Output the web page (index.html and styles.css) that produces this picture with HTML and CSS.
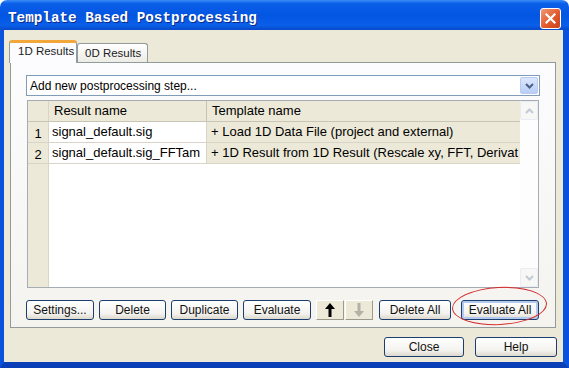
FILE: index.html
```html
<!DOCTYPE html>
<html lang="en">
  <head>
    <meta charset="UTF-8" />
    <title>Template Based Postprocessing</title>
    <link rel="stylesheet" href="styles.css">
  </head>
  <body>
    <div class="window">
      <!-- Title bar -->
      <div class="titlebar">
        <span class="title">Template Based Postprocessing</span>
        <span class="close-x">
          <svg width="11" height="11" viewBox="0 0 11 11">
            <path d="M1.5 1.5 L9.5 9.5 M9.5 1.5 L1.5 9.5" stroke="#fff" stroke-width="2.2" stroke-linecap="square" />
          </svg>
        </span>
      </div>

      <div class="body">
        <!-- Tabs -->
        <div class="tabs">
          <div class="tab active">1D Results</div>
          <div class="tab">0D Results</div>
        </div>

        <div class="panel">
          <div class="combo">
            <span class="combo-text">Add new postprocessing step...</span>
            <span class="combo-btn">
              <svg width="9" height="6" viewBox="0 0 9 6">
                <path d="M1 1 L4.5 4.5 L8 1" fill="none" stroke="#4d6185" stroke-width="2" />
              </svg>
            </span>
          </div>

          <!-- Grid -->
          <div class="grid">
            <div class="cells">
              <div class="row head">
                <div class="rh"></div>
                <div class="c1">Result name</div>
                <div class="c2">Template name</div>
              </div>
              <div class="row">
                <div class="rh">1</div>
                <div class="c1">signal_default.sig</div>
                <div class="c2">+ Load 1D Data File (project and external)</div>
              </div>
              <div class="row">
                <div class="rh">2</div>
                <div class="c1">signal_default.sig_FFTam</div>
                <div class="c2">+ 1D Result from 1D Result (Rescale xy, FFT, Derivat</div>
              </div>
              <div class="filler"><div class="rh"></div></div>
            </div>
            <div class="vscroll">
              <span class="sbtn">
                <svg width="9" height="6" viewBox="0 0 9 6">
                  <path d="M1 5 L4.5 1.5 L8 5" fill="none" stroke="#c3cad6" stroke-width="2" />
                </svg>
              </span>
              <span class="track"></span>
              <span class="sbtn">
                <svg width="9" height="6" viewBox="0 0 9 6">
                  <path d="M1 1 L4.5 4.5 L8 1" fill="none" stroke="#c3cad6" stroke-width="2" />
                </svg>
              </span>
            </div>
          </div>

          <!-- Buttons -->
          <div class="actions">
            <button class="btn w-settings">Settings...</button>
            <button class="btn w-delete">Delete</button>
            <button class="btn w-dup">Duplicate</button>
            <button class="btn w-eval">Evaluate</button>
            <button class="arrow-btn">
              <svg width="12" height="16" viewBox="0 0 12 16">
                <path d="M6 1 L11 7 L7.5 7 L7.5 15 L4.5 15 L4.5 7 L1 7 Z" fill="#000" />
              </svg>
            </button>
            <button class="arrow-btn down">
              <svg width="12" height="16" viewBox="0 0 12 16">
                <path d="M6 15 L11 9 L7.5 9 L7.5 1 L4.5 1 L4.5 9 L1 9 Z" fill="#b4b2a6" />
              </svg>
            </button>
            <button class="btn w-delall">Delete All</button>
            <div class="marked">
              <button class="btn w-evalall focus">Evaluate All</button>
              <span class="ring"></span>
            </div>
          </div>
        </div>

        <div class="footer">
          <button class="btn w-close">Close</button>
          <button class="btn w-help">Help</button>
        </div>
      </div>
    </div>
  </body>
</html>
```

FILE: styles.css
```css
* {
  margin: 0;
  padding: 0;
  box-sizing: border-box;
}

body {
  font-family: "Liberation Sans", Arial, sans-serif;
  font-size: 12px;
  color: #000;
  background: #fff;
}

.window {
  width: 569px;
  height: 368px;
  display: flex;
  flex-direction: column;
}

/* Title bar */
.titlebar {
  height: 30px;
  display: flex;
  justify-content: space-between;
  align-items: flex-start;
  padding: 0 8px 0 8px;
  border-radius: 7px 7px 0 0;
  background: linear-gradient(#3c8df8 0%, #0a5ee8 12%, #0256e2 50%, #0a5fe9 85%, #0848c8 100%);
}

.title {
  font-family: "Liberation Mono", monospace;
  font-weight: bold;
  font-size: 14.3px;
  color: #fff;
  margin-top: 10px;
  text-shadow: 1px 1px 0 #0b2a8a;
}

.close-x {
  margin-top: 8px;
  width: 21px;
  height: 21px;
  border: 1px solid #fff;
  border-radius: 3px;
  background: linear-gradient(135deg, #f09a7a, #e25a2c 55%, #c8421c);
  display: flex;
  align-items: center;
  justify-content: center;
}

/* Window body */
.body {
  flex: 1;
  background: #ece9d8;
  border-left: 4px solid #0a52db;
  border-right: 6px solid #0a52db;
  border-bottom: 6px solid #0a3fb8;
  padding: 10px 6px 0 5px;
  display: flex;
  flex-direction: column;
}

.tabs {
  display: flex;
  align-items: flex-end;
  height: 22px;
  position: relative;
  z-index: 1;
}

.tab {
  height: 19px;
  width: 71px;
  border: 1px solid #919b9c;
  border-bottom: none;
  border-radius: 3px 3px 0 0;
  background: linear-gradient(#fff, #ecebe5);
  font-size: 11.5px;
  color: #222;
  padding: 3px 0 0 7px;
}

.tab.active {
  height: 23px;
  width: 68px;
  margin-bottom: -1px;
  border-top: 3px solid #f3a73a;
  background: #fcfcfe;
  padding: 2px 0 0 8px;
}

.panel {
  margin-left: 1px;
  width: 546px;
  border: 1px solid #919b9c;
  background: linear-gradient(#fcfcfe, #f4f3ee);
  padding: 12px 15px 7px 15px;
  display: flex;
  flex-direction: column;
}

/* Combo */
.combo {
  height: 21px;
  border: 1px solid #7f9db9;
  background: #fff;
  display: flex;
  align-items: center;
  justify-content: space-between;
  padding: 0 1px 0 3px;
}

.combo-btn {
  width: 18px;
  height: 17px;
  border: 1px solid #b9cbf3;
  border-radius: 2px;
  background: linear-gradient(#dce7fd, #b9cdf8);
  display: flex;
  align-items: center;
  justify-content: center;
}

/* Grid */
.grid {
  margin: 4px 1px 0 1px;
  height: 188px;
  border: 1px solid #a5acb5;
  display: flex;
  background: #fff;
  font-size: 13px;
}

.cells {
  flex: 1;
  display: flex;
  flex-direction: column;
  overflow: hidden;
}

.row {
  display: flex;
  height: 21px;
  border-bottom: 1px solid #d8d5c8;
}

.row .rh,
.filler .rh {
  width: 21px;
  flex: none;
  background: #ece9d8;
  border-right: 1px solid #d8d5c8;
  text-align: center;
  padding-top: 4px;
}

.c1 {
  width: 158px;
  flex: none;
  padding: 2px 0 0 3px;
  border-right: 1px solid #d8d5c8;
  white-space: nowrap;
  overflow: hidden;
}

.c2 {
  flex: 1;
  padding: 2px 0 0 4px;
  background: #ece9d8;
  white-space: nowrap;
  overflow: hidden;
}

.row.head {
  background: #ece9d8;
  border-bottom: 1px solid #c9c5b5;
}

.row.head .c1 {
  background: #ece9d8;
  padding-left: 5px;
  border-right: 1px solid #c9c5b5;
}

.row.head .c2 {
  padding-left: 5px;
}

.filler {
  flex: 1;
  display: flex;
}

.vscroll {
  width: 18px;
  display: flex;
  flex-direction: column;
  background: #fdfdfd;
}

.sbtn {
  height: 19px;
  border: 1px solid #e9ecf3;
  border-radius: 2px;
  background: #f7f7f5;
  display: flex;
  align-items: center;
  justify-content: center;
}

.track {
  flex: 1;
}

/* Buttons */
.actions {
  margin-top: 12px;
  display: flex;
  gap: 5px;
}

.btn {
  height: 20px;
  border: 1px solid #1c3d70;
  border-radius: 3px;
  background: linear-gradient(#ffffff, #f3f2ee 70%, #dcd8cc);
  font-family: "Liberation Sans", Arial, sans-serif;
  font-size: 12px;
  color: #111;
}

.btn.focus {
  box-shadow: inset 0 0 0 2px #b3c9ee;
}

.w-settings { width: 68px; }
.w-delete { width: 67px; }
.w-dup { width: 67px; }
.w-eval { width: 68px; }
.w-delall { width: 72px; margin-left: 1px; }
.w-evalall { width: 78px; }
.w-close { width: 80px; }
.w-help { width: 82px; }

.arrow-btn {
  width: 28px;
  height: 20px;
  border: 1px solid;
  border-color: #fff #9d9a8c #9d9a8c #fff;
  background: #ece9d8;
  display: flex;
  align-items: center;
  justify-content: center;
}

.arrow-btn.down {
  margin-left: -4px;
}

.marked {
  position: relative;
  margin-left: 5px;
}

.ring {
  position: absolute;
  left: -9px;
  right: -8px;
  top: -13px;
  bottom: -5px;
  border: 1.5px solid #d42a2a;
  border-radius: 50%;
  transform: rotate(-3deg);
  pointer-events: none;
}

.footer {
  margin-top: 9px;
  display: flex;
  justify-content: flex-end;
  gap: 11px;
}
```
